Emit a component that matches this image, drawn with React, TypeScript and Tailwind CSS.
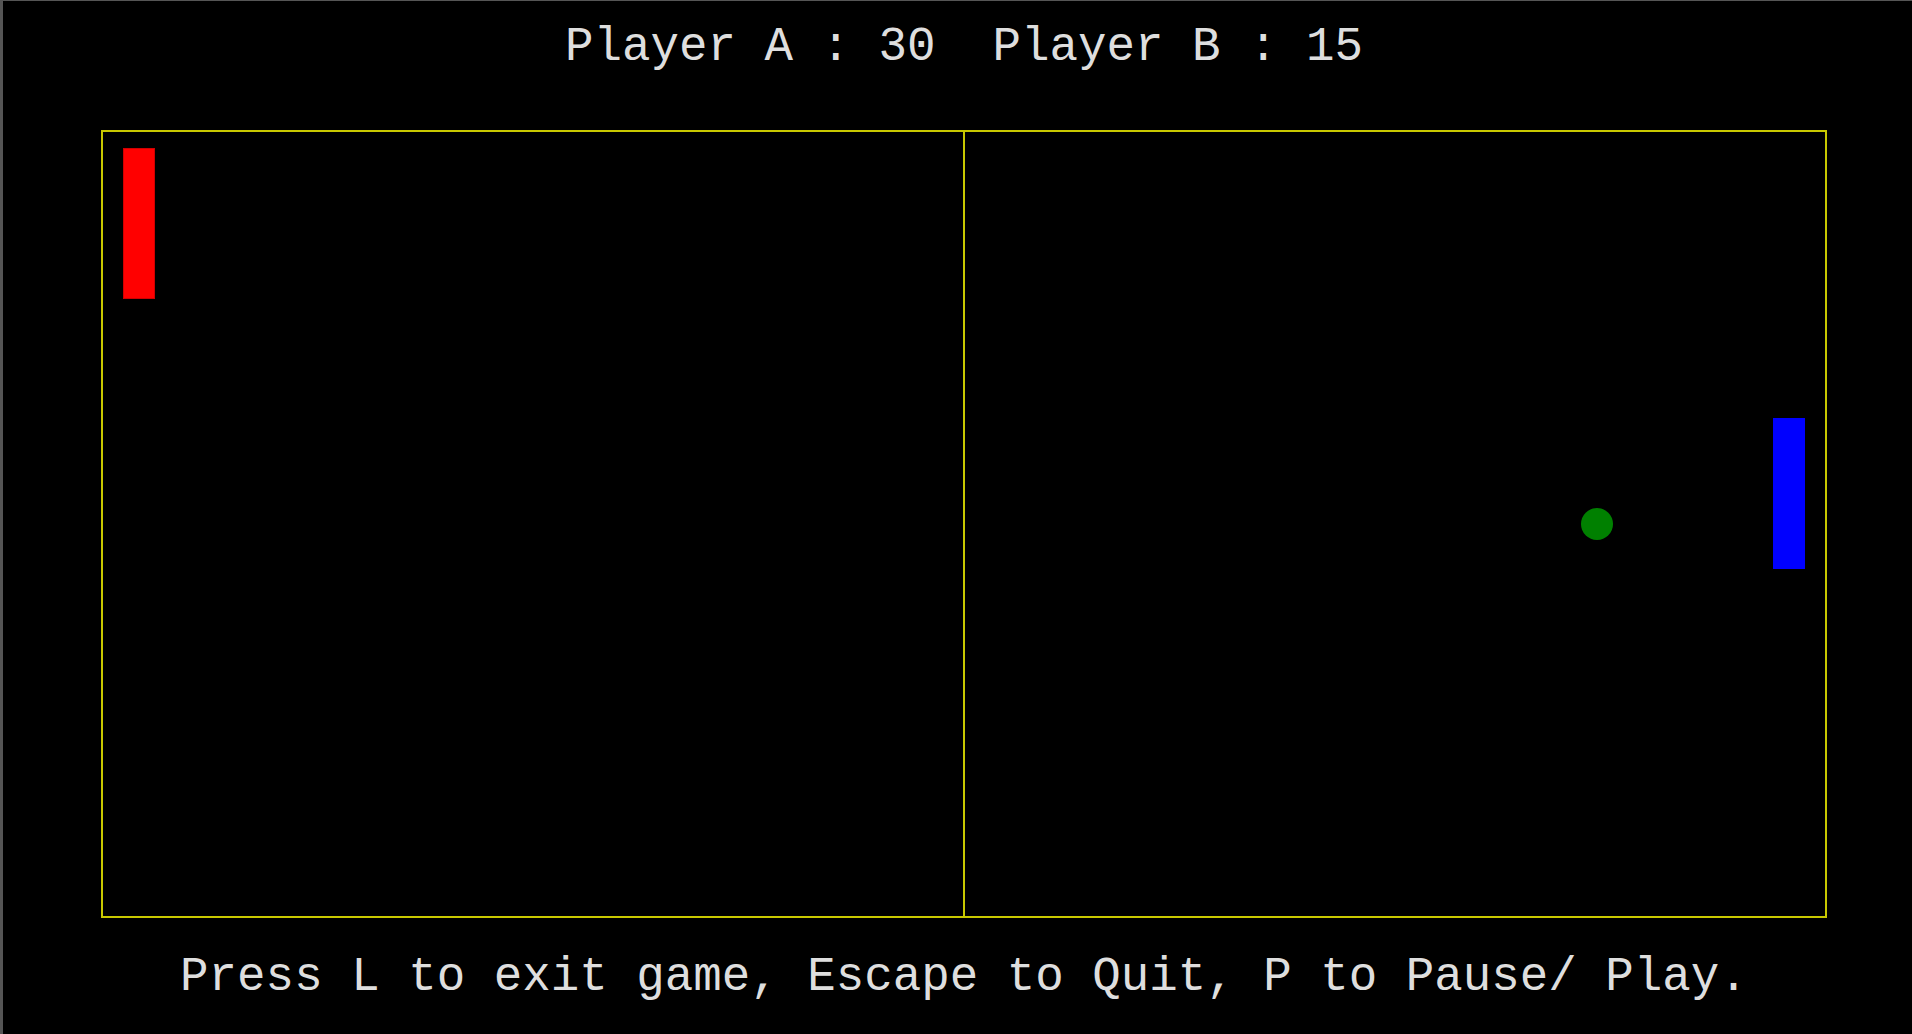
export default function App() {
  return (
    <div className="h-[1034px] w-full overflow-hidden bg-black border-l-[3px] border-t border-[#555555]" style={{ fontFamily: '"Liberation Mono", "Courier New", monospace' }}>
      <div className="ml-[98px] w-[1726px] pt-[22px] text-center text-[47.5px] leading-[48px] text-[#dedede] whitespace-pre">
        {'Player A : 30  Player B : 15'}
      </div>

      <div className="relative ml-[98px] mt-[59px] flex h-[788px] w-[1726px] border-2 border-[#c8c800]">
        <div className="w-[862px] border-r-2 border-[#c8c800]" />
        <div className="flex-1" />

        {/* player A paddle */}
        <div className="absolute left-[20px] top-[16px] h-[151px] w-[32px] border border-[#d00000] bg-[#ff0000]" />
        {/* player B paddle */}
        <div className="absolute right-[20px] top-[286px] h-[151px] w-[32px] bg-[#0000ff]" />
        {/* ball */}
        <div className="absolute left-[1478px] top-[376px] h-[32px] w-[32px] rounded-full bg-[#008000]" />
      </div>

      <div className="ml-[98px] mt-[35px] w-[1726px] text-center text-[47.5px] leading-[48px] text-[#dedede] whitespace-pre">
        Press L to exit game, Escape to Quit, P to Pause/ Play.
      </div>
    </div>
  );
}
